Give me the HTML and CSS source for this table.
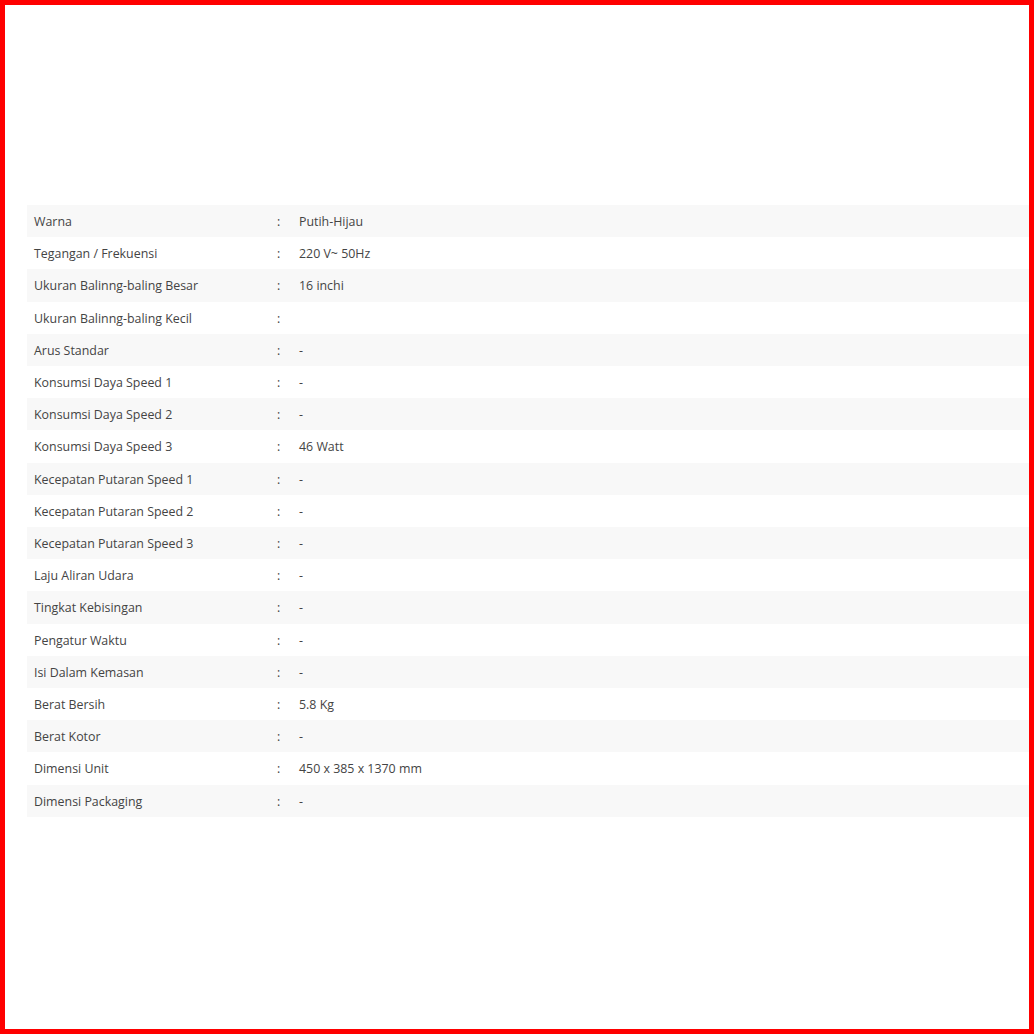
FILE: index.html
```html
<!DOCTYPE html>
<html lang="id">
<head>
  <meta charset="UTF-8" />
  <meta name="viewport" content="width=device-width, initial-scale=1" />
  <title>Spesifikasi Produk</title>
  <link rel="stylesheet" href="styles.css">
</head>
<body>
  <div class="spec-wrap">
    <table class="spec-table">
      <tr><td class="spec-label">Warna</td><td class="spec-sep">:</td><td class="spec-value">Putih-Hijau</td></tr>
      <tr><td class="spec-label">Tegangan / Frekuensi</td><td class="spec-sep">:</td><td class="spec-value">220 V~ 50Hz</td></tr>
      <tr><td class="spec-label">Ukuran Balinng-baling Besar</td><td class="spec-sep">:</td><td class="spec-value">16 inchi</td></tr>
      <tr><td class="spec-label">Ukuran Balinng-baling Kecil</td><td class="spec-sep">:</td><td class="spec-value"></td></tr>
      <tr><td class="spec-label">Arus Standar</td><td class="spec-sep">:</td><td class="spec-value">-</td></tr>
      <tr><td class="spec-label">Konsumsi Daya Speed 1</td><td class="spec-sep">:</td><td class="spec-value">-</td></tr>
      <tr><td class="spec-label">Konsumsi Daya Speed 2</td><td class="spec-sep">:</td><td class="spec-value">-</td></tr>
      <tr><td class="spec-label">Konsumsi Daya Speed 3</td><td class="spec-sep">:</td><td class="spec-value">46 Watt</td></tr>
      <tr><td class="spec-label">Kecepatan Putaran Speed 1</td><td class="spec-sep">:</td><td class="spec-value">-</td></tr>
      <tr><td class="spec-label">Kecepatan Putaran Speed 2</td><td class="spec-sep">:</td><td class="spec-value">-</td></tr>
      <tr><td class="spec-label">Kecepatan Putaran Speed 3</td><td class="spec-sep">:</td><td class="spec-value">-</td></tr>
      <tr><td class="spec-label">Laju Aliran Udara</td><td class="spec-sep">:</td><td class="spec-value">-</td></tr>
      <tr><td class="spec-label">Tingkat Kebisingan</td><td class="spec-sep">:</td><td class="spec-value">-</td></tr>
      <tr><td class="spec-label">Pengatur Waktu</td><td class="spec-sep">:</td><td class="spec-value">-</td></tr>
      <tr><td class="spec-label">Isi Dalam Kemasan</td><td class="spec-sep">:</td><td class="spec-value">-</td></tr>
      <tr><td class="spec-label">Berat Bersih</td><td class="spec-sep">:</td><td class="spec-value">5.8 Kg</td></tr>
      <tr><td class="spec-label">Berat Kotor</td><td class="spec-sep">:</td><td class="spec-value">-</td></tr>
      <tr><td class="spec-label">Dimensi Unit</td><td class="spec-sep">:</td><td class="spec-value">450 x 385 x 1370 mm</td></tr>
      <tr><td class="spec-label">Dimensi Packaging</td><td class="spec-sep">:</td><td class="spec-value">-</td></tr>
    </table>
  </div>
</body>
</html>
```

FILE: styles.css
```css
html {
  background: #ffffff;
}

body {
  margin: 0;
  box-sizing: border-box;
  min-height: 1034px;
  border: 5px solid #ff0000;
  background: #ffffff;
  font-family: 'Open Sans', 'Noto Sans', sans-serif;
  font-size: 12.4px;
  color: #444444;
}

.spec-wrap {
  padding: 200px 0 0 22px;
}

.spec-table {
  width: 100%;
  border-collapse: collapse;
  border-spacing: 0;
}

.spec-table td {
  padding: 8px 7px 6px;
  line-height: 18.2px;
  vertical-align: middle;
}

.spec-table tr:nth-child(odd) td {
  background: #f8f8f8;
}

.spec-label {
  width: 229px;
}

.spec-sep {
  width: 8px;
}
```
